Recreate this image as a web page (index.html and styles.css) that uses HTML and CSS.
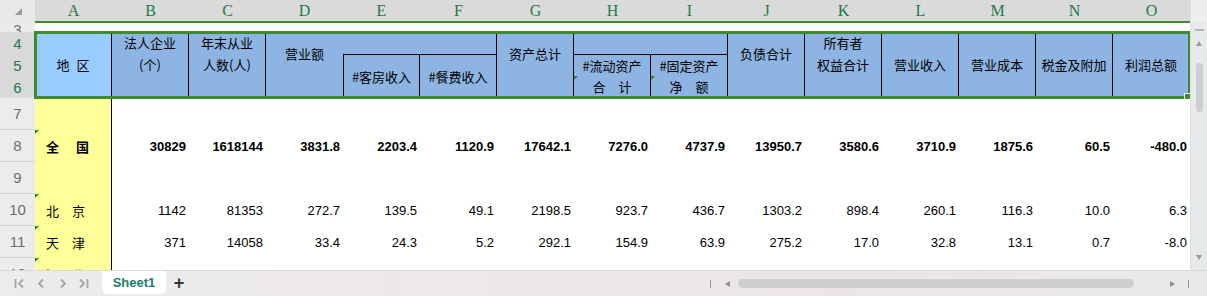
FILE: index.html
```html
<!DOCTYPE html>
<html lang="zh-CN">
<head>
<meta charset="utf-8">
<title>Sheet1</title>
<link rel="stylesheet" href="styles.css">
</head>
<body>
<div class="app">
  <div class="sheet">
    <div class="main">
      <div class="grid colheads">
        <div class="corner"><span class="corner-tri"></span></div>
        <div class="col">A</div><div class="col">B</div><div class="col">C</div><div class="col">D</div><div class="col">E</div>
        <div class="col">F</div><div class="col">G</div><div class="col">H</div><div class="col">I</div><div class="col">J</div>
        <div class="col">K</div><div class="col">L</div><div class="col">M</div><div class="col">N</div><div class="col">O</div>
      </div>

      <div class="grid r3">
        <div class="rl3"><span>3</span></div>
      </div>

      <div class="grid hdr">
        <div class="rl sel rl4">4</div>
        <div class="rl sel rl5">5</div>
        <div class="rl sel rl6">6</div>
        <div class="hc mid hA"><span class="spaced">地 区</span></div>
        <div class="hc top hB"><span>法人企业</span><span>(个)</span></div>
        <div class="hc top hC"><span>年末从业</span><span>人数(人)</span></div>
        <div class="hc up hD noright"><span>营业额</span></div>
        <div class="hc hEF"></div>
        <div class="hc mid hE bt bl"><span>#客房收入</span></div>
        <div class="hc mid hF bt"><span>#餐费收入</span></div>
        <div class="hc up hG"><span>资产总计</span></div>
        <div class="hc hHI"></div>
        <div class="hc mid hH5 bt"><span>#流动资产</span></div>
        <div class="hc mid hH6 mk"><span>合　计</span></div>
        <div class="hc mid hI5 bt"><span>#固定资产</span></div>
        <div class="hc mid hI6 mk"><span>净　额</span></div>
        <div class="hc up hJ"><span>负债合计</span></div>
        <div class="hc top hK"><span>所有者</span><span>权益合计</span></div>
        <div class="hc mid hL"><span>营业收入</span></div>
        <div class="hc mid hM"><span>营业成本</span></div>
        <div class="hc mid hN"><span>税金及附加</span></div>
        <div class="hc mid hO"><span>利润总额</span></div>
      </div>

      <div class="grid row">
        <div class="rl">7</div><div class="nm"></div>
      </div>
      <div class="grid row bold">
        <div class="rl">8</div><div class="nm mk">全　国</div>
        <div class="v">30829</div><div class="v">1618144</div><div class="v">3831.8</div><div class="v">2203.4</div><div class="v">1120.9</div>
        <div class="v">17642.1</div><div class="v">7276.0</div><div class="v">4737.9</div><div class="v">13950.7</div><div class="v">3580.6</div>
        <div class="v">3710.9</div><div class="v">1875.6</div><div class="v">60.5</div><div class="v">-480.0</div>
      </div>
      <div class="grid row">
        <div class="rl">9</div><div class="nm"></div>
      </div>
      <div class="grid row">
        <div class="rl">10</div><div class="nm mk">北　京</div>
        <div class="v">1142</div><div class="v">81353</div><div class="v">272.7</div><div class="v">139.5</div><div class="v">49.1</div>
        <div class="v">2198.5</div><div class="v">923.7</div><div class="v">436.7</div><div class="v">1303.2</div><div class="v">898.4</div>
        <div class="v">260.1</div><div class="v">116.3</div><div class="v">10.0</div><div class="v">6.3</div>
      </div>
      <div class="grid row">
        <div class="rl">11</div><div class="nm mk">天　津</div>
        <div class="v">371</div><div class="v">14058</div><div class="v">33.4</div><div class="v">24.3</div><div class="v">5.2</div>
        <div class="v">292.1</div><div class="v">154.9</div><div class="v">63.9</div><div class="v">275.2</div><div class="v">17.0</div>
        <div class="v">32.8</div><div class="v">13.1</div><div class="v">0.7</div><div class="v">-8.0</div>
      </div>
      <div class="grid row">
        <div class="rl">12</div><div class="nm mk">河　北</div>
        <div class="v">993</div><div class="v">29476</div><div class="v">78.5</div><div class="v">34.1</div><div class="v">33.2</div>
        <div class="v">398.1</div><div class="v">158.0</div><div class="v">108.1</div><div class="v">279.8</div><div class="v">7.6</div>
        <div class="v">82.0</div><div class="v">31.9</div><div class="v">1.0</div><div class="v">38.1</div>
      </div>

      <div class="selection"></div>
    </div>

    <div class="vscroll">
      <div class="vtop"></div>
      <div class="vdash"></div>
      <div class="tri-up"></div>
      <div class="vthumb"></div>
      <div class="vfill"></div>
      <div class="tri-down"></div>
    </div>
  </div>

  <div class="tabbar">
    <div class="nav">
      <svg width="102" height="25" viewBox="0 0 102 25" fill="none" stroke="#a5a5a5" stroke-width="1.8">
        <path d="M15.5 8v9"/>
        <path d="M23 8.5l-4 4 4 4"/>
        <path d="M43 8.5l-4 4 4 4"/>
        <path d="M61 8.5l4 4-4 4"/>
        <path d="M80 8.5l4 4-4 4"/>
        <path d="M87.5 8v9"/>
      </svg>
    </div>
    <div class="tab">Sheet1</div>
    <div class="plus">+</div>
    <div class="hscroll">
      <span class="hbar"></span>
      <span class="tri-left"></span>
      <span class="hthumb"></span>
      <span class="tri-right"></span>
      <span class="hbar"></span>
    </div>
  </div>
</div>
</body>
</html>
```

FILE: styles.css
```css
* { box-sizing: border-box; }

body {
  margin: 0;
  background: #ffffff;
}

.app {
  width: 1207px;
  height: 296px;
  overflow: hidden;
  display: flex;
  flex-direction: column;
  font-family: "Liberation Sans", "Noto Sans CJK SC", sans-serif;
  color: #000;
}

.sheet {
  display: flex;
  height: 270px;
  flex: none;
}

.main {
  width: 1190px;
  height: 270px;
  overflow: hidden;
  position: relative;
  background: #fff;
}

.grid {
  display: grid;
  grid-template-columns: 35px repeat(15, 77px);
}

/* column letters */
.colheads {
  height: 23px;
  background: #dadada;
}

.corner {
  background: #e9e9e9;
  display: flex;
  justify-content: flex-end;
  align-items: flex-end;
  padding: 0 13px 8px 0;
}

.corner-tri {
  width: 0;
  height: 0;
  border-left: 7px solid transparent;
  border-bottom: 7px solid #9b9b9b;
}

.col {
  border-bottom: 2px solid #3d8b2a;
  color: #1d7b4c;
  font-family: "Liberation Serif", serif;
  font-size: 16px;
  display: flex;
  align-items: center;
  justify-content: center;
  padding-top: 1px;
}

/* row 3 */
.r3 {
  height: 9px;
  grid-template-rows: 9px;
}

.rl3 {
  background: #ebebeb;
  overflow: hidden;
  color: #6e6e6e;
  font-size: 15px;
  line-height: 15px;
  text-align: center;
}

.rl3 span {
  display: block;
  margin-top: -1px;
}

/* header block */
.hdr {
  grid-template-rows: 22px 22px 22px;
  font-family: "Noto Sans CJK SC", "Liberation Sans", sans-serif;
  font-size: 13px;
}

.rl {
  background: #ececec;
  color: #6e6e6e;
  font-family: "Liberation Sans", sans-serif;
  font-size: 15px;
  display: flex;
  align-items: center;
  justify-content: center;
  border-bottom: 1px solid #d4d4d4;
}

.rl.sel {
  background: #d9d9d9;
  color: #1d7b4c;
  border-bottom: none;
}

.rl4 { grid-area: 1 / 1; }
.rl5 { grid-area: 2 / 1; }
.rl6 { grid-area: 3 / 1; }

.hc {
  background: #8db4e2;
  border-right: 1px solid #000;
  display: flex;
  flex-direction: column;
  align-items: center;
  line-height: 22px;
  position: relative;
  white-space: nowrap;
}

.hc.top { justify-content: flex-start; }
.hc.mid { justify-content: center; }
.hc.up { justify-content: center; padding-bottom: 22px; }
.hc.noright { border-right: none; }
.hc.bt { border-top: 1px solid #000; }
.hc.bl { border-left: 1px solid #000; }

.spaced { word-spacing: 4px; }

.hA { grid-area: 1 / 2 / 4 / 3; background: #99ccff; }
.hB { grid-area: 1 / 3 / 4 / 4; }
.hC { grid-area: 1 / 4 / 4 / 5; }
.hD { grid-area: 1 / 5 / 4 / 6; }
.hEF { grid-area: 1 / 6 / 2 / 8; }
.hE { grid-area: 2 / 6 / 4 / 7; }
.hF { grid-area: 2 / 7 / 4 / 8; }
.hG { grid-area: 1 / 8 / 4 / 9; }
.hHI { grid-area: 1 / 9 / 2 / 11; }
.hH5 { grid-area: 2 / 9 / 3 / 10; }
.hH6 { grid-area: 3 / 9 / 4 / 10; }
.hI5 { grid-area: 2 / 10 / 3 / 11; }
.hI6 { grid-area: 3 / 10 / 4 / 11; }
.hJ { grid-area: 1 / 11 / 4 / 12; }
.hK { grid-area: 1 / 12 / 4 / 13; }
.hL { grid-area: 1 / 13 / 4 / 14; }
.hM { grid-area: 1 / 14 / 4 / 15; }
.hN { grid-area: 1 / 15 / 4 / 16; }
.hO { grid-area: 1 / 16 / 4 / 17; }

/* data rows */
.row {
  height: 32px;
  font-size: 13px;
}

.nm {
  background: #ffff99;
  border-right: 1px solid #000;
  font-family: "Noto Sans CJK SC", "Liberation Sans", sans-serif;
  display: flex;
  align-items: center;
  padding-left: 11px;
  position: relative;
}

.v {
  display: flex;
  align-items: center;
  justify-content: flex-end;
  padding-right: 3px;
}

.bold .v,
.bold .nm {
  font-weight: bold;
}

.bold .nm { letter-spacing: 2px; }

/* green number-as-text marker */
.mk::before {
  content: "";
  position: absolute;
  left: 0;
  top: 0;
  width: 0;
  height: 0;
  border-top: 4px solid #1f8a2a;
  border-right: 4px solid transparent;
}

/* selection outline */
.selection {
  position: absolute;
  left: 34px;
  top: 31px;
  width: 1156px;
  height: 68px;
  border: 3px solid #3d8b2a;
  border-right-width: 2px;
  pointer-events: none;
}

.selection::after {
  content: "";
  position: absolute;
  right: -3px;
  bottom: -4px;
  width: 5px;
  height: 5px;
  background: #3d8b2a;
  border: 1px solid #fff;
}

/* vertical scrollbar */
.vscroll {
  width: 17px;
  height: 270px;
  background: #e7eaea;
  border-left: 1px solid #dedede;
  display: flex;
  flex-direction: column;
  align-items: center;
}

.vtop {
  align-self: stretch;
  height: 22px;
  background: #eeeeee;
}

.vdash {
  width: 9px;
  height: 2px;
  background: #b4b4b4;
  margin-top: 7px;
}

.tri-up {
  width: 0;
  height: 0;
  border-left: 3px solid transparent;
  border-right: 3px solid transparent;
  border-bottom: 5px solid #9a9a9a;
  margin-top: 10px;
}

.vthumb {
  width: 7px;
  height: 49px;
  border-radius: 4px;
  background: #cbcfcf;
  margin-top: 17px;
}

.vfill { flex: 1; }

.tri-down {
  width: 0;
  height: 0;
  border-left: 3px solid transparent;
  border-right: 3px solid transparent;
  border-top: 5px solid #9a9a9a;
  margin-bottom: 10px;
}

/* tab bar */
.tabbar {
  height: 26px;
  flex: none;
  display: flex;
  align-items: flex-start;
  border-top: 1px solid #d9d9d9;
  background: linear-gradient(90deg, #ececec 0%, #eee7e7 45%, #ede5e5 70%, #e9e9e9 100%);
}

.nav {
  width: 102px;
  height: 25px;
  display: flex;
}

.tab {
  width: 64px;
  height: 23px;
  background: #ffffff;
  border-radius: 0 0 6px 6px;
  color: #17806a;
  font-weight: bold;
  font-size: 13px;
  display: flex;
  align-items: center;
  justify-content: center;
}

.plus {
  width: 26px;
  height: 25px;
  display: flex;
  align-items: center;
  justify-content: center;
  font-size: 18px;
  font-weight: bold;
  color: #333;
}

.hscroll {
  margin-left: auto;
  width: 500px;
  height: 25px;
  display: flex;
  align-items: center;
  padding-left: 3px;
}

.hbar {
  width: 1px;
  height: 8px;
  background: #9a9a9a;
}

.tri-left {
  width: 0;
  height: 0;
  border-top: 3px solid transparent;
  border-bottom: 3px solid transparent;
  border-right: 5px solid #8f8f8f;
  margin-left: 14px;
}

.hthumb {
  width: 396px;
  height: 9px;
  border-radius: 5px;
  background: #cfcfcf;
  margin-left: 8px;
}

.tri-right {
  width: 0;
  height: 0;
  border-top: 3px solid transparent;
  border-bottom: 3px solid transparent;
  border-left: 5px solid #8f8f8f;
  margin-left: 36px;
  margin-right: 13px;
}
```
